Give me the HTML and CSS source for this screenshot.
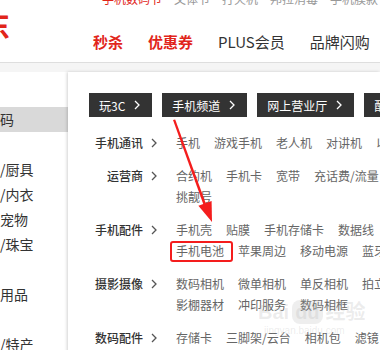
FILE: index.html
```html
<!DOCTYPE html>
<html lang="zh-CN">
<head>
<meta charset="utf-8">
<title>手机频道</title>
<link rel="stylesheet" href="styles.css">
</head>
<body>
<div class="page">
  <header class="header">
    <div class="hotwords">
      <span class="hot red">手机数码节</span>
      <span class="hot">文体节</span>
      <span class="hot">打火机</span>
      <span class="hot">邦拉消毒</span>
      <span class="hot">手机膜款</span>
      <span class="hot">数码</span>
    </div>
    <div class="mainrow">
      <div class="logo"><span class="logo-text">京东</span></div>
      <nav class="nav">
        <a class="nav-item red">秒杀</a>
        <a class="nav-item red">优惠券</a>
        <a class="nav-item">PLUS会员</a>
        <a class="nav-item">品牌闪购</a>
      </nav>
    </div>
  </header>

  <main class="body">
    <ul class="sidebar">
      <li class="side-item"></li>
      <li class="side-item active">码</li>
      <li class="side-item"></li>
      <li class="side-item">/厨具</li>
      <li class="side-item">/内衣</li>
      <li class="side-item">宠物</li>
      <li class="side-item">/珠宝</li>
      <li class="side-item"></li>
      <li class="side-item">用品</li>
      <li class="side-item"></li>
      <li class="side-item">/特产</li>
    </ul>

    <section class="panel">
      <div class="tabs">
        <a class="tab">玩3C<svg class="chev" viewBox="0 0 6 10"><path d="M1 1 L5 5 L1 9"/></svg></a>
        <a class="tab">手机频道<svg class="chev" viewBox="0 0 6 10"><path d="M1 1 L5 5 L1 9"/></svg></a>
        <a class="tab">网上营业厅<svg class="chev" viewBox="0 0 6 10"><path d="M1 1 L5 5 L1 9"/></svg></a>
        <a class="tab">配件选购中心<svg class="chev" viewBox="0 0 6 10"><path d="M1 1 L5 5 L1 9"/></svg></a>
      </div>

      <div class="cats">
        <dl class="cat">
          <dt class="cat-label">手机通讯<svg class="chev dark" viewBox="0 0 6 10"><path d="M1 1 L5 5 L1 9"/></svg></dt>
          <dd class="cat-items">
            <div class="line"><a>手机</a><a>游戏手机</a><a>老人机</a><a>对讲机</a><a>以旧换新</a></div>
          </dd>
        </dl>
        <dl class="cat">
          <dt class="cat-label">运营商<svg class="chev dark" viewBox="0 0 6 10"><path d="M1 1 L5 5 L1 9"/></svg></dt>
          <dd class="cat-items">
            <div class="line"><a>合约机</a><a>手机卡</a><a>宽带</a><a>充话费/流量</a></div>
            <div class="line"><a>挑靓号</a></div>
          </dd>
        </dl>
        <dl class="cat">
          <dt class="cat-label">手机配件<svg class="chev dark" viewBox="0 0 6 10"><path d="M1 1 L5 5 L1 9"/></svg></dt>
          <dd class="cat-items">
            <div class="line"><a>手机壳</a><a>贴膜</a><a>手机存储卡</a><a>数据线</a><a>充电器</a></div>
            <div class="line"><a class="marked">手机电池</a><a>苹果周边</a><a>移动电源</a><a>蓝牙耳机</a></div>
          </dd>
        </dl>
        <dl class="cat">
          <dt class="cat-label">摄影摄像<svg class="chev dark" viewBox="0 0 6 10"><path d="M1 1 L5 5 L1 9"/></svg></dt>
          <dd class="cat-items">
            <div class="line"><a>数码相机</a><a>微单相机</a><a>单反相机</a><a>拍立得</a></div>
            <div class="line"><a>影棚器材</a><a>冲印服务</a><a>数码相框</a></div>
          </dd>
        </dl>
        <dl class="cat">
          <dt class="cat-label">数码配件<svg class="chev dark" viewBox="0 0 6 10"><path d="M1 1 L5 5 L1 9"/></svg></dt>
          <dd class="cat-items">
            <div class="line"><a>存储卡</a><a>三脚架/云台</a><a>相机包</a><a>滤镜</a></div>
          </dd>
        </dl>
      </div>
    </section>
  </main>

  <div class="watermark">
    <span class="wm-main">Bai<span class="wm-du">du</span>经验</span>
    <span class="wm-url">jingyan.baidu.com</span>
  </div>

  <svg class="arrow" viewBox="0 0 380 350" width="380" height="350">
    <polygon points="173,120 175.2,119.4 206,204 203.6,205" />
    <polygon points="212,222 198.4,205.7 211.6,200.9" />
  </svg>
</div>
</body>
</html>
```

FILE: styles.css
```css
* { box-sizing: border-box; }

html, body {
  margin: 0;
  padding: 0;
  background: #fff;
}

body {
  width: 380px;
  height: 350px;
  overflow: hidden;
  font-family: "Noto Sans CJK SC", "Noto Sans", "Liberation Sans", sans-serif;
  color: #333;
}

a { color: inherit; text-decoration: none; }

.page {
  position: relative;
  width: 380px;
  height: 350px;
  overflow: hidden;
}

/* ---------- header ---------- */
.header {
  height: 63px;
  border-bottom: 1px solid #dedede;
  background: #fff;
}

.hotwords {
  height: 6px;
  overflow: visible;
  display: flex;
  gap: 12px;
  padding-left: 102px;
  font-size: 12px;
  line-height: 12px;
  color: #999;
  white-space: nowrap;
}

.hotwords .hot { margin-top: -7px; }
.hotwords .red { color: #e1251b; }

.mainrow {
  display: flex;
  align-items: flex-start;
  height: 56px;
}

.logo {
  width: 93px;
  height: 40px;
  overflow: hidden;
  padding-top: 3px;
}

.logo-text {
  display: block;
  margin-left: -50px;
  font-size: 30px;
  line-height: 30px;
  font-weight: 700;
  color: #e1251b;
  white-space: nowrap;
}

.nav {
  display: flex;
  gap: 25px;
  padding-top: 26px;
  font-size: 15px;
  line-height: 20px;
  white-space: nowrap;
}

.nav-item { color: #333; }
.nav-item.red { color: #e1251b; font-weight: 700; }

/* ---------- body ---------- */
.body {
  display: flex;
  align-items: flex-start;
  background: #f5f5f5;
  padding-top: 9px;
  height: 287px;
}

.sidebar {
  list-style: none;
  margin: 0;
  padding: 10px 0 0;
  width: 68px;
  height: 300px;
  background: #fff;
}

.side-item {
  height: 25px;
  line-height: 25px;
  font-size: 14px;
  color: #333;
  white-space: nowrap;
  overflow: hidden;
}

.side-item.active { background: #d9d9d9; }

.panel {
  flex: 1;
  height: 300px;
  background: #fff;
  padding: 21px 0 0 21px;
  box-shadow: -1px 0 3px rgba(0, 0, 0, 0.18);
  overflow: hidden;
}

.tabs {
  display: flex;
  gap: 10px;
  white-space: nowrap;
}

.tab {
  display: flex;
  align-items: center;
  gap: 9px;
  height: 24px;
  padding: 0 12px 0 10px;
  background: #333;
  color: #fff;
  font-size: 12px;
  flex: none;
}

.chev {
  width: 6px;
  height: 10px;
  flex: none;
}

.chev path {
  fill: none;
  stroke: #fff;
  stroke-width: 1.3;
}

.chev.dark path { stroke: #555; }

.cats {
  display: flex;
  flex-direction: column;
  gap: 12px;
  margin-top: 15px;
}

.cat {
  display: grid;
  grid-template-columns: 70px 1fr;
  column-gap: 17px;
  margin: 0;
}

.cat-label {
  display: flex;
  justify-content: flex-end;
  align-items: center;
  gap: 8px;
  padding-right: 2px;
  height: 21px;
  font-size: 12px;
  font-weight: 500;
  color: #333;
  white-space: nowrap;
}

.cat-items { margin: 0; }

.line {
  display: flex;
  gap: 14px;
  height: 21px;
  line-height: 21px;
  font-size: 12px;
  color: #666;
  white-space: nowrap;
}

.line a { flex: none; }

.marked { position: relative; }

.marked::after {
  content: "";
  position: absolute;
  left: -6px;
  right: -9px;
  top: 1px;
  bottom: -1px;
  border: 2px solid #f41d1d;
  border-radius: 3px;
}

/* ---------- overlays ---------- */
.watermark {
  position: absolute;
  left: 258px;
  top: 300px;
  display: flex;
  flex-direction: column;
  align-items: flex-start;
  color: rgba(170, 170, 170, 0.22);
  pointer-events: none;
}

.wm-main {
  font-size: 20px;
  line-height: 24px;
  font-weight: 700;
  font-family: "Liberation Sans", "Noto Sans CJK SC", sans-serif;
}

.wm-du {
  display: inline-block;
  margin: 0 3px;
  padding: 0 3px;
  border-radius: 8px;
  background: rgba(170, 170, 170, 0.2);
}

.wm-url {
  font-size: 10px;
  line-height: 14px;
  padding-left: 6px;
  font-family: "Liberation Sans", sans-serif;
}

.arrow {
  position: absolute;
  left: 0;
  top: 0;
  pointer-events: none;
}

.arrow polygon { fill: #f41d1d; }
```
